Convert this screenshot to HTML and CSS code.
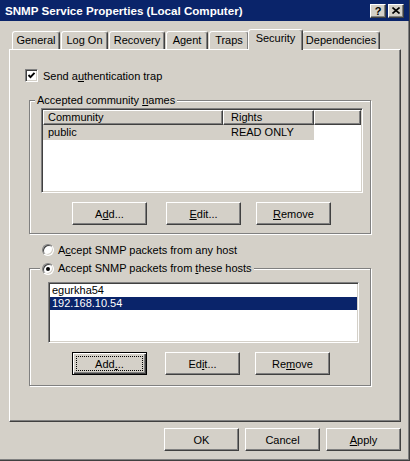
FILE: index.html
```html
<html>
    <head>
        <title>SNMP Service Properties</title>
        <link rel="stylesheet" href="styles.css">
    </head>
    <body>
        <div class="window">
            <div class="titlebar">
                <span class="title">SNMP Service Properties (Local Computer)</span>
                <div class="title-buttons">
                    <span class="tbtn">?</span>
                    <span class="tbtn">
                        <svg width="8" height="7" viewBox="0 0 8 7">
                            <path d="M0.5 0.5 L7.5 6.5 M7.5 0.5 L0.5 6.5" stroke="#000" stroke-width="1.6" fill="none"/>
                        </svg>
                    </span>
                </div>
            </div>

            <div class="tabs">
                <div class="tab tab-general">General</div>
                <div class="tab tab-logon">Log On</div>
                <div class="tab tab-recovery">Recovery</div>
                <div class="tab tab-agent">Agent</div>
                <div class="tab tab-traps">Traps</div>
                <div class="tab tab-security active">Security</div>
                <div class="tab tab-deps">Dependencies</div>
            </div>

            <div class="panel">
                <div class="check-row">
                    <span class="checkbox">
                        <svg width="9" height="9" viewBox="0 0 9 9">
                            <path d="M1.5 4 L3.5 6.2 L7.5 1.8" stroke="#000" stroke-width="1.9" fill="none"/>
                        </svg>
                    </span>
                    <span>Send a<u>u</u>thentication trap</span>
                </div>

                <!-- community names -->
                <div class="group group-community">
                    <span class="legend">Accepted community <u>n</u>ames</span>
                    <div class="listview">
                        <div class="lv-header">
                            <span class="lv-col col-community">Community</span>
                            <span class="lv-col col-rights">Rights</span>
                            <span class="lv-col col-rest"></span>
                        </div>
                        <div class="lv-row">
                            <span class="lv-cell col-community">public</span>
                            <span class="lv-cell col-rights">READ ONLY</span>
                        </div>
                    </div>
                    <div class="btn-row">
                        <button class="btn btn-add">A<u>d</u>d...</button>
                        <button class="btn btn-edit"><u>E</u>dit...</button>
                        <button class="btn btn-remove"><u>R</u>emove</button>
                    </div>
                </div>

                <div class="radio-row">
                    <span class="radio"></span>
                    <span>A<u>c</u>cept SNMP packets from any host</span>
                </div>

                <!-- hosts -->
                <div class="group group-hosts">
                    <span class="legend legend-radio">
                        <span class="radio checked"></span>
                        <span>Accept SNMP packets from <u>t</u>hese hosts</span>
                    </span>
                    <div class="listbox">
                        <div class="lb-item">egurkha54</div>
                        <div class="lb-item selected">192.168.10.54</div>
                    </div>
                    <div class="btn-row">
                        <button class="btn btn-add2 default">Add<u>.</u>..<span class="focus-ring"></span></button>
                        <button class="btn btn-edit2">Ed<u>i</u>t...</button>
                        <button class="btn btn-remove2">Re<u>m</u>ove</button>
                    </div>
                </div>
            </div>

            <div class="footer">
                <button class="btn">OK</button>
                <button class="btn">Cancel</button>
                <button class="btn"><u>A</u>pply</button>
            </div>
        </div>
    </body>
</html>
```

FILE: styles.css
```css
body{
    margin: 0;
    font-family: "Liberation Sans", Arial, sans-serif;
    font-size: 11px;
    color: #000;
}
.window{
    width: 410px;
    height: 461px;
    box-sizing: border-box;
    background: #d4d0c8;
    border-right: 1px solid #404040;
    border-bottom: 1px solid #404040;
    box-shadow: inset -1px -1px #808080;
    display: flex;
    flex-direction: column;
}
.titlebar{
    height: 21px;
    background: #0a246a;
    color: #fff;
    font-weight: bold;
    display: flex;
    align-items: center;
    justify-content: space-between;
    padding: 0 5px 0 5px;
}
.title{
    font-size: 11.6px;
}
.title-buttons{
    display: flex;
    gap: 2px;
}
.tbtn{
    width: 16px;
    height: 14px;
    box-sizing: border-box;
    background: #d4d0c8;
    color: #000;
    border: 1px solid;
    border-color: #fff #404040 #404040 #fff;
    box-shadow: inset -1px -1px #808080;
    display: flex;
    align-items: center;
    justify-content: center;
    font-size: 11px;
    line-height: 12px;
}

/* tabs */
.tabs{
    display: flex;
    align-items: flex-end;
    height: 20px;
    margin-top: 8px;
    padding-left: 12px;
    position: relative;
    z-index: 1;
}
.tab{
    box-sizing: border-box;
    height: 18px;
    margin-right: 1px;
    border: 1px solid;
    border-bottom: none;
    border-color: #fff #404040 transparent #fff;
    border-radius: 3px 3px 0 0;
    box-shadow: inset -1px 0 #808080;
    background: #d4d0c8;
    text-align: center;
    line-height: 16px;
    white-space: nowrap;
}
.tab-general{ width: 48px; }
.tab-logon{ width: 47px; }
.tab-recovery{ width: 56px; }
.tab-agent{ width: 42px; }
.tab-traps{ width: 40px; }
.tab-security{ width: 51px; }
.tab-deps{ width: 78px; }
.tab.active{
    width: 55px;
    height: 21px;
    margin: 0 -1px -1px -2px;
    line-height: 17px;
    z-index: 1;
}

/* property page */
.panel{
    margin-left: 9px;
    width: 392px;
    height: 373px;
    box-sizing: border-box;
    border: 1px solid;
    border-color: #fff #404040 #404040 #fff;
    box-shadow: inset -1px -1px #808080;
}
.check-row{
    display: flex;
    align-items: center;
    gap: 5px;
    height: 13px;
    margin: 19px 0 0 15px;
}
.checkbox{
    width: 13px;
    height: 13px;
    box-sizing: border-box;
    background: #fff;
    border: 1px solid;
    border-color: #808080 #fff #fff #808080;
    box-shadow: inset 1px 1px #404040, inset -1px -1px #d4d0c8;
    display: flex;
    align-items: center;
    justify-content: center;
}
.group{
    position: relative;
    margin-left: 19px;
    width: 342px;
    box-sizing: border-box;
    border: 1px solid #808080;
    box-shadow: inset 1px 1px #fff, 1px 1px #fff;
}
.group-community{
    margin-top: 18px;
    padding: 7px 0 8px 11px;
}
.group-hosts{
    margin-top: 12px;
    padding: 13px 0 10px 18px;
}
.legend{
    position: absolute;
    top: -7px;
    left: 5px;
    padding: 0 2px;
    background: #d4d0c8;
    line-height: 13px;
    white-space: nowrap;
}
.legend-radio{
    left: 10px;
    display: flex;
    align-items: center;
    gap: 4px;
}

/* list view */
.listview{
    width: 322px;
    height: 85px;
    box-sizing: border-box;
    background: #fff;
    border: 1px solid;
    border-color: #808080 #fff #fff #808080;
    box-shadow: inset 1px 1px #404040, inset -1px -1px #d4d0c8;
    padding: 1px;
}
.lv-header{
    display: flex;
    height: 15px;
}
.lv-col{
    box-sizing: border-box;
    border: 1px solid;
    border-color: #fff #404040 #404040 #fff;
    box-shadow: inset -1px -1px #808080;
    background: #d4d0c8;
    line-height: 13px;
}
.col-community{
    width: 180px;
    padding-left: 4px;
    box-sizing: border-box;
}
.col-rights{
    width: 91px;
    padding-left: 7px;
    box-sizing: border-box;
}
.col-rest{
    flex: 1;
}
.lv-row{
    display: flex;
    height: 15px;
    line-height: 15px;
}
.lv-cell{
    background: #d4d0c8;
}
.lv-cell.col-community{
    padding-left: 5px;
}
.lv-cell.col-rights{
    padding-left: 8px;
}

/* list box */
.listbox{
    width: 311px;
    height: 61px;
    box-sizing: border-box;
    background: #fff;
    border: 1px solid;
    border-color: #808080 #fff #fff #808080;
    box-shadow: inset 1px 1px #404040, inset -1px -1px #d4d0c8;
    padding: 1px;
}
.lb-item{
    height: 13px;
    line-height: 13px;
    padding-left: 2px;
}
.lb-item.selected{
    background: #0a246a;
    color: #fff;
}

/* radios */
.radio-row{
    display: flex;
    align-items: center;
    gap: 4px;
    height: 12px;
    margin: 10px 0 0 32px;
}
.radio{
    width: 12px;
    height: 12px;
    box-sizing: border-box;
    border-radius: 50%;
    background: #fff;
    border: 1px solid;
    border-color: #808080 #fff #fff #808080;
    box-shadow: inset 1px 1px #404040, inset -1px -1px #d4d0c8;
    display: flex;
    align-items: center;
    justify-content: center;
}
.radio.checked::after{
    content: "";
    width: 4px;
    height: 4px;
    border-radius: 50%;
    background: #000;
}

/* buttons */
.btn-row{
    display: flex;
    margin-top: 9px;
}
.btn{
    position: relative;
    width: 75px;
    height: 23px;
    box-sizing: border-box;
    padding: 0;
    margin: 0;
    font: inherit;
    color: #000;
    background: #d4d0c8;
    border: 1px solid;
    border-color: #fff #404040 #404040 #fff;
    box-shadow: inset -1px -1px #808080;
    display: flex;
    align-items: center;
    justify-content: center;
}
.btn-add{ margin-left: 31px; }
.btn-edit{ margin-left: 19px; }
.btn-remove{ margin-left: 15px; }
.btn-add2{ margin-left: 24px; }
.btn-edit2{ margin-left: 18px; }
.btn-remove2{ margin-left: 15px; }
.btn.default{
    border: 1px solid #000;
    box-shadow: inset 1px 1px #fff, inset -1px -1px #404040, inset -2px -2px #808080;
}
.focus-ring{
    position: absolute;
    top: 3px;
    left: 3px;
    right: 3px;
    bottom: 3px;
    border: 1px dotted #000;
}
.footer{
    display: flex;
    justify-content: flex-end;
    gap: 6px;
    margin-top: 6px;
    padding-right: 8px;
}
```
